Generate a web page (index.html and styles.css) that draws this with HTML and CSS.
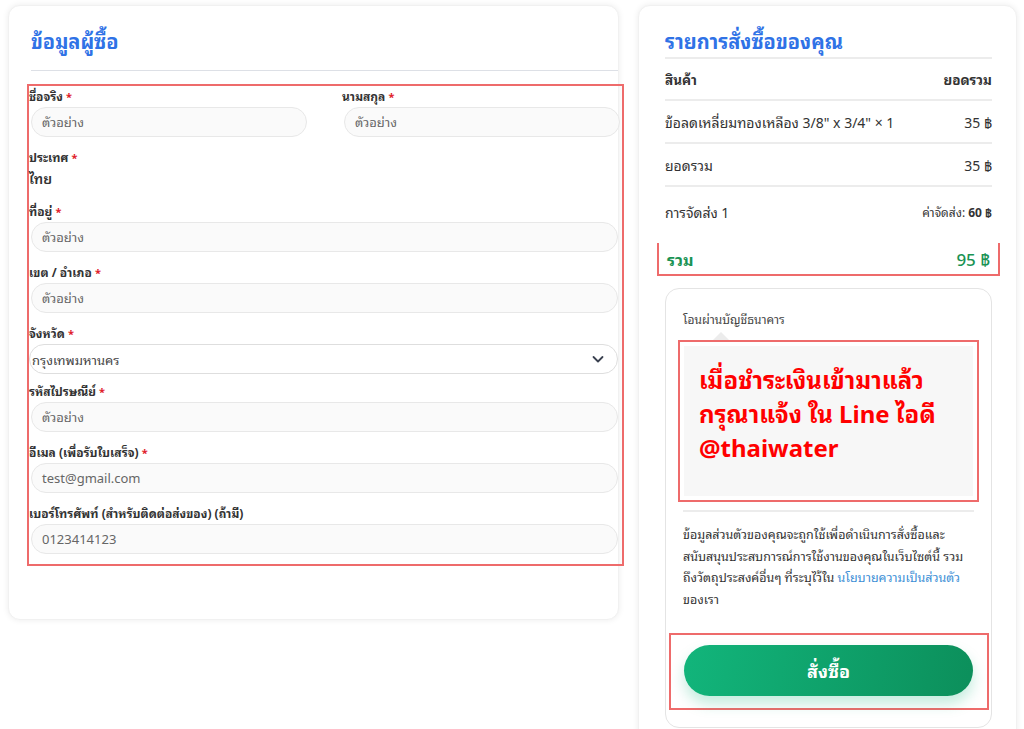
FILE: index.html
```html
<!DOCTYPE html>
<html lang="th">
<head>
<meta charset="utf-8">
<title>Checkout</title>
<link rel="stylesheet" href="styles.css">
</head>
<body>
<div class="page">
  <section class="card billing">
    <h2 class="card-title">ข้อมูลผู้ซื้อ</h2>
    <div class="title-rule"></div>
    <div class="fields mark">
      <div class="row two">
        <div class="field">
          <label>ชื่อจริง <span class="req">*</span></label>
          <div class="input">ตัวอย่าง</div>
        </div>
        <div class="field">
          <label>นามสกุล <span class="req">*</span></label>
          <div class="input">ตัวอย่าง</div>
        </div>
      </div>
      <div class="field country">
        <label>ประเทศ <span class="req">*</span></label>
        <div class="static">ไทย</div>
      </div>
      <div class="field">
        <label>ที่อยู่ <span class="req">*</span></label>
        <div class="input">ตัวอย่าง</div>
      </div>
      <div class="field">
        <label>เขต / อำเภอ <span class="req">*</span></label>
        <div class="input">ตัวอย่าง</div>
      </div>
      <div class="field sel">
        <label>จังหวัด <span class="req">*</span></label>
        <div class="select">
          <span>กรุงเทพมหานคร</span>
          <svg width="14" height="14" viewBox="0 0 14 14"><path d="M2.5 5l4.5 4.5L11.5 5" fill="none" stroke="#3a4150" stroke-width="1.8" stroke-linecap="round" stroke-linejoin="round"/></svg>
        </div>
      </div>
      <div class="field">
        <label>รหัสไปรษณีย์ <span class="req">*</span></label>
        <div class="input">ตัวอย่าง</div>
      </div>
      <div class="field">
        <label>อีเมล (เพื่อรับใบเสร็จ) <span class="req">*</span></label>
        <div class="input">test@gmail.com</div>
      </div>
      <div class="field last">
        <label>เบอร์โทรศัพท์ (สำหรับติดต่อส่งของ) (ถ้ามี)</label>
        <div class="input">0123414123</div>
      </div>
    </div>
  </section>

  <section class="card order">
    <h2 class="card-title">รายการสั่งซื้อของคุณ</h2>
    <div class="table">
      <div class="trow head"><span>สินค้า</span><span>ยอดรวม</span></div>
      <div class="trow"><span>ข้อลดเหลี่ยมทองเหลือง 3/8" x 3/4" × 1</span><span>35 ฿</span></div>
      <div class="trow"><span>ยอดรวม</span><span>35 ฿</span></div>
      <div class="trow ship"><span>การจัดส่ง 1</span><span class="fee">ค่าจัดส่ง: <b>60 ฿</b></span></div>
      <div class="trow total mark"><span>รวม</span><span class="amt">95 ฿</span></div>
    </div>
    <div class="payment">
      <div class="method">โอนผ่านบัญชีธนาคาร</div>
      <div class="notice-wrap mark">
        <div class="notice">เมื่อชำระเงินเข้ามาแล้ว<br>กรุณาแจ้ง ใน Line ไอดี<br>@thaiwater</div>
      </div>
      <div class="privacy">ข้อมูลส่วนตัวของคุณจะถูกใช้เพื่อดำเนินการสั่งซื้อและ<br>สนับสนุนประสบการณ์การใช้งานของคุณในเว็บไซต์นี้ รวม<br>ถึงวัตถุประสงค์อื่นๆ ที่ระบุไว้ใน <a href="#">นโยบายความเป็นส่วนตัว</a><br>ของเรา</div>
      <div class="btn-wrap mark">
        <button class="btn">สั่งซื้อ</button>
      </div>
    </div>
  </section>
</div>
</body>
</html>
```

FILE: styles.css
```css
* { box-sizing: border-box; }
html, body { margin: 0; padding: 0; background: #fff; }
body {
  font-family: "Noto Sans", "Noto Sans Thai Looped", "Noto Sans Thai", "Noto Sans CJK SC", sans-serif;
  color: #333;
  overflow: hidden;
  height: 729px;
}
.page {
  display: flex;
  align-items: flex-start;
  gap: 19px;
  padding: 5px 7px 0 8px;
}
.card {
  background: #fff;
  border-radius: 12px;
  box-shadow: 0 0 6px rgba(0,0,0,0.08);
  border: 1px solid #f1f1f1;
}
.billing {
  width: 611px;
  height: 615px;
  padding: 22px 0 0 18px;
}
.card-title {
  margin: 0;
  font-size: 20px;
  font-weight: 700;
  color: #2f72e6;
  line-height: 28px;
  padding-left: 4px;
}
.title-rule {
  height: 1px;
  background: #dde0e6;
  margin: 14px 0 13px 4px;
}
.mark { border: 2px solid #ee6b6b; }
.fields {
  margin-right: -6px;
  padding: 2px 4px 10px 0;
  display: flex;
  flex-direction: column;
}
.row.two {
  display: grid;
  grid-template-columns: 278px 278px;
  gap: 35px;
}
.field { display: flex; flex-direction: column; margin-bottom: 12px; }
.field.last { margin-bottom: 0; }
.field.sel { margin-bottom: 9px; }
.field label {
  font-size: 12px;
  font-weight: 700;
  color: #333;
  line-height: 17px;
  margin-bottom: 2px;
}
.req { color: #e0202a; font-size: 11px; }
.input {
  height: 30px;
  margin-left: 2px;
  border: 1px solid #e8e8e8;
  background: #fafafa;
  border-radius: 16px;
  font-size: 13px;
  color: #666;
  line-height: 28px;
  padding-left: 10px;
}
.country { margin-bottom: 13px; }
.static {
  font-size: 14px;
  font-weight: 600;
  color: #333;
  line-height: 22px;
}
.select {
  height: 30px;
  border: 1px solid #dedede;
  background: #fff;
  border-radius: 16px;
  font-size: 13px;
  color: #444;
  display: flex;
  align-items: center;
  justify-content: space-between;
  padding: 0 12px 0 2px;
}
.select svg { display: block; }

.order {
  width: 379px;
  height: 740px;
  padding: 22px 24px 0 26px;
}
.order .card-title { padding-left: 0; margin-bottom: 1px; }
.table { font-size: 14px; color: #333; }
.trow {
  display: flex;
  justify-content: space-between;
  align-items: center;
  border-top: 2px solid #ececec;
  height: 43px;
}
.trow.head { font-weight: 700; height: 42px; font-size: 13.5px; }
.trow.ship { height: 51px; }
.fee { font-size: 12px; }
.fee b { font-weight: 700; }
.trow.total {
  border-top: 0;
  margin: 7px -8px 0 -8px;
  padding: 0 8px;
  height: 33px;
  color: #1a9354;
  font-weight: 700;
  font-size: 16px;
}
.trow.total .amt { font-weight: 500; font-size: 17px; }
.payment {
  margin-top: 12px;
  border: 1px solid #e4e4e4;
  border-radius: 14px;
  padding: 23px 17px 0 17px;
  height: 440px;
}
.method {
  font-size: 12px;
  color: #444;
  line-height: 16px;
  margin-bottom: 12px;
  position: relative;
}
.method::after {
  content: "";
  position: absolute;
  left: 30px;
  bottom: -12px;
  border: 8px solid transparent;
  border-bottom-color: #ececec;
}
.notice-wrap {
  margin: 0 -5px;
  padding: 4px 4px;
}
.notice {
  background: #f7f7f7;
  color: #f00;
  font-size: 24px;
  font-weight: 700;
  line-height: 34px;
  padding: 17px 15px 30px 15px;
  height: 150px;
}
.privacy {
  border-top: 2px solid #ececec;
  margin-top: 8px;
  padding-top: 12px;
  font-size: 12.5px;
  line-height: 21.7px;
  color: #333;
  white-space: nowrap;
}
.privacy a { color: #3d8fd6; text-decoration: none; }
.btn-wrap {
  margin: 22px -15px 0 -14px;
  padding: 10px 14px 12px 13px;
}
.btn {
  display: block;
  width: 100%;
  height: 51px;
  border: 0;
  border-radius: 26px;
  background: linear-gradient(100deg, #12b57b, #0c8f5b);
  color: #fff;
  font-family: inherit;
  font-size: 18px;
  font-weight: 700;
  box-shadow: 0 8px 14px rgba(18,181,123,0.25);
}
```
